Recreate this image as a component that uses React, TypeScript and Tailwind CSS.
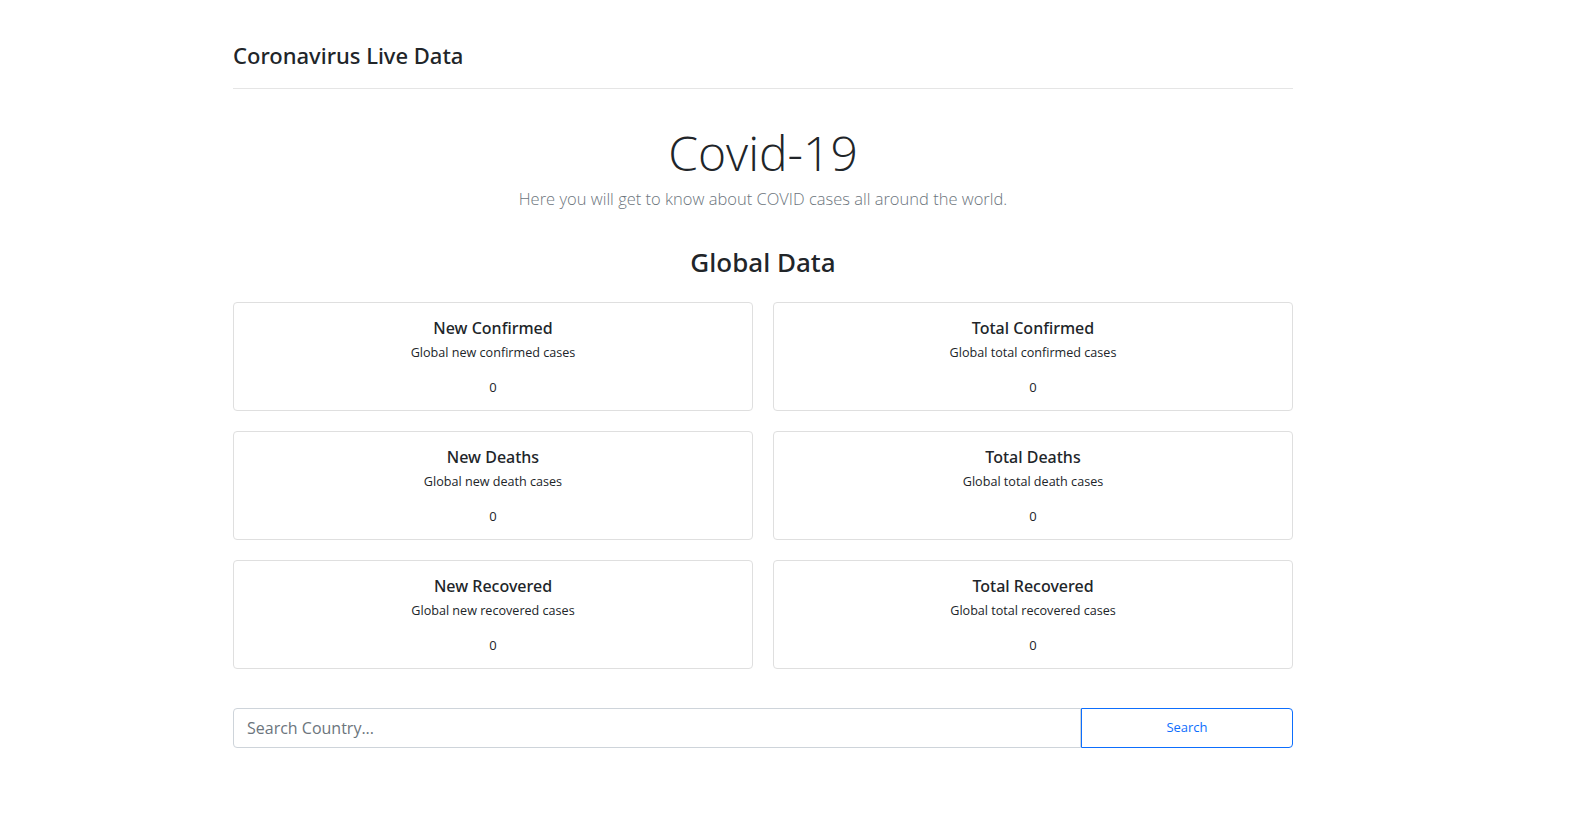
import React from 'react';

const cards = [
  { title: 'New Confirmed', text: 'Global new confirmed cases', value: 0 },
  { title: 'Total Confirmed', text: 'Global total confirmed cases', value: 0 },
  { title: 'New Deaths', text: 'Global new death cases', value: 0 },
  { title: 'Total Deaths', text: 'Global total death cases', value: 0 },
  { title: 'New Recovered', text: 'Global new recovered cases', value: 0 },
  { title: 'Total Recovered', text: 'Global total recovered cases', value: 0 },
];

function DataCard({ title, text, value }: { title: string; text: string; value: number }) {
  return (
    <div className="h-[109px] border border-[#dfdfdf] rounded-[4px] flex flex-col items-center pt-[12px]">
      <h5 className="font-['Noto_Sans',sans-serif] text-[16px] font-medium leading-[26px] text-[#212529]">{title}</h5>
      <p className="text-[12.6px] leading-[20px] mt-[2px] text-[#212529]">{text}</p>
      <p className="text-[13px] leading-[20px] mt-[14px] text-[#212529]">{value}</p>
    </div>
  );
}

export default function App() {
  return (
    <div className="min-h-screen bg-white text-[#212529] font-['Open_Sans',sans-serif]">
      <div className="ml-[233px] w-[1060px]">
        {/* Header */}
        <header className="pt-[40px] pb-[18px] border-b border-[#e5e5e5]">
          <span className="font-['Noto_Sans',sans-serif] text-[22px] font-medium leading-[30px]">Coronavirus Live Data</span>
        </header>

        {/* Hero */}
        <div className="text-center mt-[31px]">
          <h1 className="text-[48px] font-light leading-[66px]">Covid-19</h1>
          <p className="text-[16.5px] font-light leading-[26px] text-[#6c757d]">
            Here you will get to know about COVID cases all around the world.
          </p>
        </div>

        <h2 className="font-['Noto_Sans',sans-serif] text-center text-[26px] font-medium leading-[38px] mt-[31px]">Global Data</h2>

        {/* Cards */}
        <div className="grid grid-cols-2 gap-5 mt-[21px]">
          {cards.map((c) => (
            <DataCard key={c.title} {...c} />
          ))}
        </div>

        {/* Search */}
        <div className="flex mt-[39px] h-[40px]">
          <input
            type="text"
            placeholder="Search Country..."
            className="flex-1 border border-[#ced4da] rounded-l-[4px] px-[13px] text-[16px] placeholder:text-[#6c757d] outline-none"
          />
          <button className="w-[212px] border border-[#0d6efd] rounded-r-[4px] text-[13px] text-[#0d6efd]">
            Search
          </button>
        </div>
      </div>
    </div>
  );
}
